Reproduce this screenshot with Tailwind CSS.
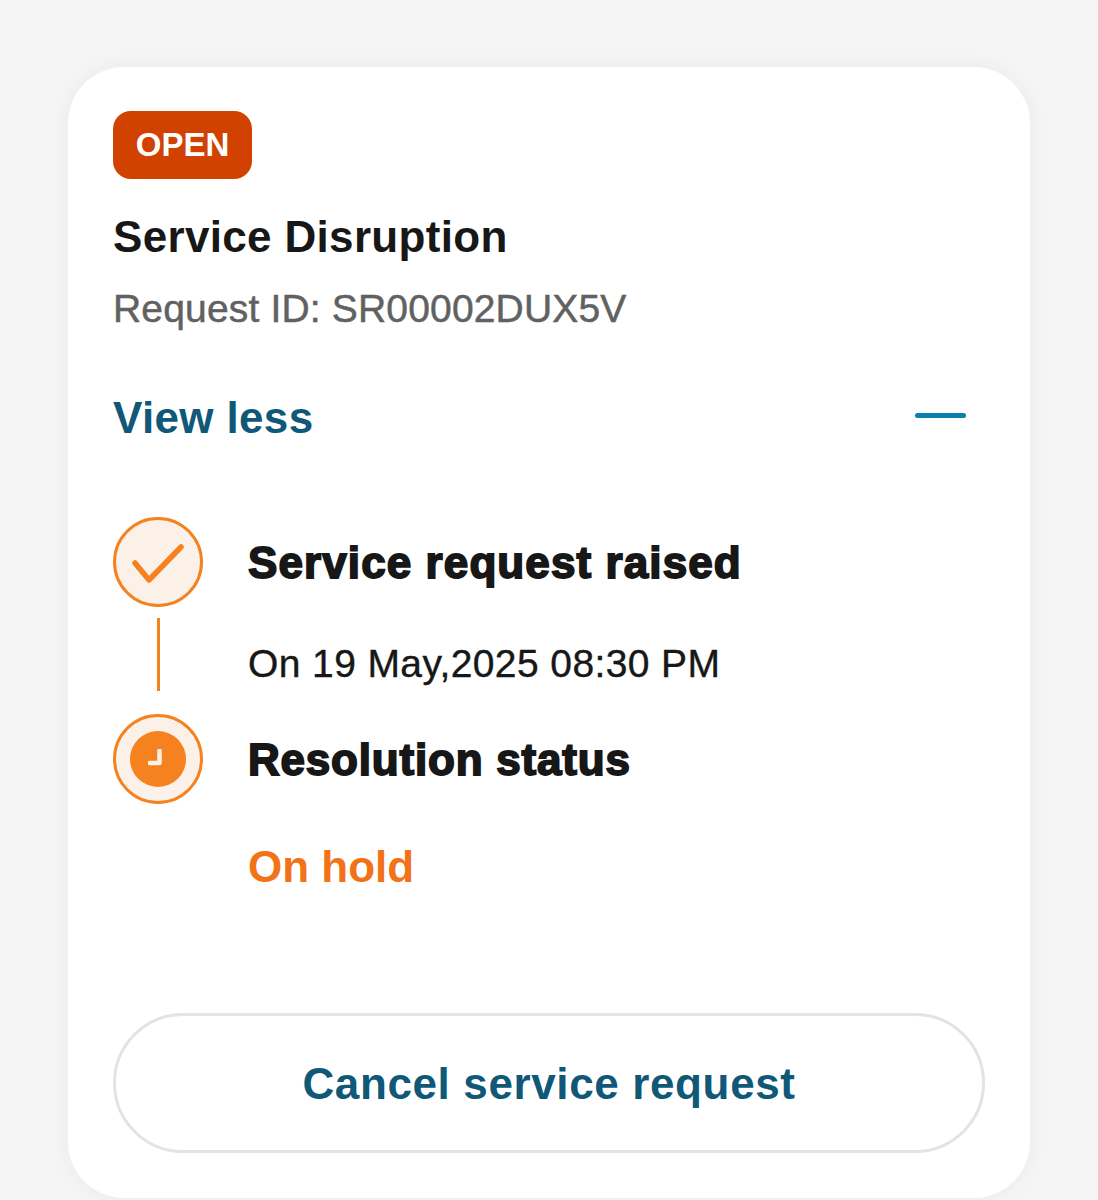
<!DOCTYPE html>
<html><head><meta charset="utf-8"><script src="https://cdn.jsdelivr.net/npm/@tailwindcss/browser@4"></script></head>
<body class="m-0 h-[1200px] overflow-hidden bg-[#f5f5f5] font-['Liberation_Sans',sans-serif]">
<div class="pt-[67px] pl-[68px]">
<div class="w-[962px] h-[1131px] rounded-[56px] bg-white shadow-[0_0_24px_rgba(0,0,0,0.05)] px-[45px] pt-[44px] flex flex-col">
  <div class="w-[139px] h-[68px] rounded-[18px] bg-[#d14200] text-white text-[33px] font-bold flex items-center justify-center">OPEN</div>
  <div class="mt-[31px] h-[54px] leading-[54px] text-[44px] font-bold tracking-[0.33px] text-[#171717]">Service Disruption</div>
  <div class="mt-[22px] h-[46px] leading-[46px] text-[39px] tracking-[0.17px] [-webkit-text-stroke:0.5px_#616161] text-[#616161]">Request ID: SR00002DUX5V</div>
  <div class="mt-[60px] h-[52px] flex items-center justify-between pr-[19px]">
    <span class="text-[44px] font-bold tracking-[0.35px] text-[#0f5878]">View less</span>
    <span class="w-[51px] h-[5px] rounded-full bg-[#0b7fb0] -mt-[5px]"></span>
  </div>
  <div class="mt-[73px] flex gap-[45px]">
    <div class="w-[90px] shrink-0 flex flex-col items-center">
      <div class="w-[90px] h-[90px] rounded-full border-[3px] border-[#f5811f] bg-[#fcf1e9] flex items-center justify-center">
        <svg width="54" height="42" viewBox="0 0 54 42" fill="none"><path d="M4 19 L18 36 L50 3" transform="translate(0,3)" stroke="#f5811f" stroke-width="5.5" stroke-linecap="round" stroke-linejoin="round"/></svg>
      </div>
      <div class="mt-[11px] w-[3px] h-[73px] bg-[#f5811f]"></div>
      <div class="mt-[23px] w-[90px] h-[90px] rounded-full border-[3px] border-[#f5811f] bg-[#fcf1e9] flex items-center justify-center">
        <div class="w-[56px] h-[56px] rounded-full bg-[#f5811f] flex items-center justify-center">
          <svg width="20" height="20" viewBox="0 0 20 20" fill="none"><path d="M11.5 1.5 V14 H1.5" stroke="#fcf1e9" stroke-width="4.5" stroke-linecap="round" stroke-linejoin="round"/></svg>
        </div>
      </div>
    </div>
    <div class="flex flex-col">
      <div class="mt-[20px] h-[52px] leading-[52px] text-[44px] font-bold tracking-[1.1px] [-webkit-text-stroke:1.8px_#171717] text-[#171717]">Service request raised</div>
      <div class="mt-[52px] h-[46px] leading-[46px] text-[39px] tracking-[0.4px] [-webkit-text-stroke:0.4px_#171717] text-[#171717]">On 19 May,2025 08:30 PM</div>
      <div class="mt-[47px] h-[52px] leading-[52px] text-[44px] font-bold tracking-[0.8px] [-webkit-text-stroke:1.8px_#171717] text-[#171717]">Resolution status</div>
      <div class="mt-[55px] h-[52px] leading-[52px] text-[44px] font-bold text-[#f27317]">On hold</div>
    </div>
  </div>
  <div class="mt-[120px] h-[140px] rounded-full border-[3px] border-[#e3e3e3] flex items-center justify-center text-[44px] font-bold tracking-[0.63px] text-[#0f5878] pt-[2px]">Cancel service request</div>
</div>
</div>
</body></html>
